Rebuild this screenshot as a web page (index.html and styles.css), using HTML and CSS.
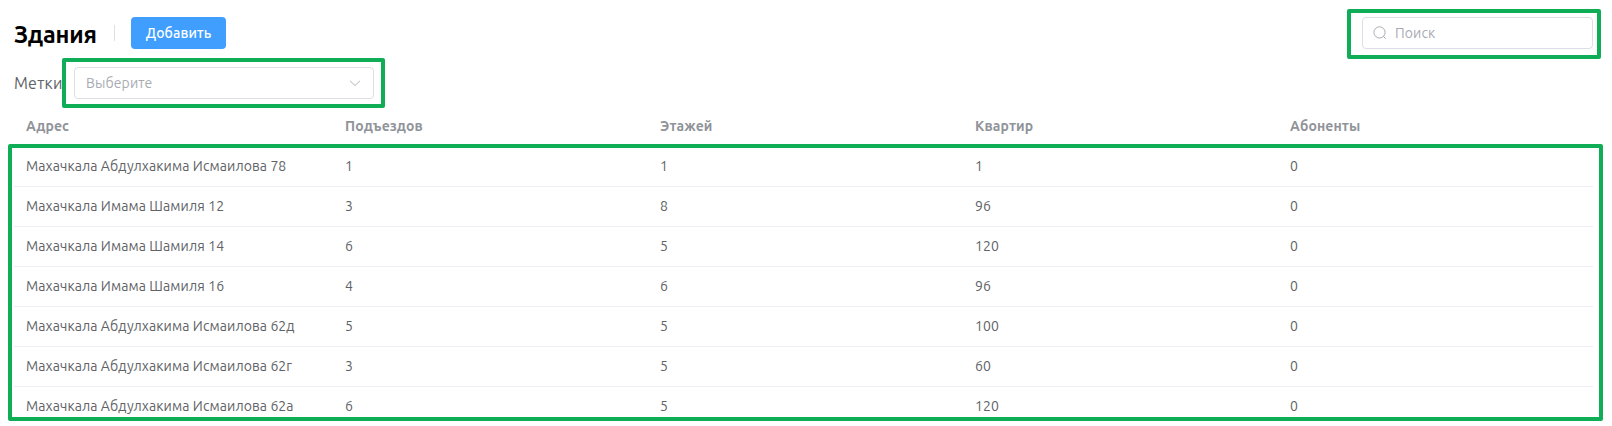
FILE: index.html
```
<!DOCTYPE html>
<html lang="ru">
<head>
<meta charset="utf-8">
<title>Здания</title>
<link rel="stylesheet" href="styles.css">
</head>
<body>
<main class="page">
  <header class="toolbar">
    <h1 class="title">Здания</h1>
    <span class="divider"></span>
    <button class="add">Добавить</button>
    <div class="search">
      <svg class="search-icon" viewBox="0 0 14 14" fill="none" stroke="currentColor" stroke-width="1"><circle cx="6.5" cy="6.4" r="5.6"/><path d="M10.5 10.5 12.7 12.7"/></svg>
      <span class="search-text">Поиск</span>
      <i class="frame frame-search"></i>
    </div>
  </header>
  <div class="filter">
    <label class="label">Метки</label>
    <div class="select">
      <span class="select-text">Выберите</span>
      <svg class="chevron" viewBox="0 0 14 14" fill="none" stroke="currentColor" stroke-width="0.9"><path d="M2 4.8 7 9.5 12 4.8"/></svg>
      <i class="frame frame-select"></i>
    </div>
  </div>
  <section class="table">
    <div class="row head"><span>Адрес</span><span>Подъездов</span><span>Этажей</span><span>Квартир</span><span>Абоненты</span></div>
    <div class="body">
      <div class="row"><span>Махачкала Абдулхакима Исмаилова 78</span><span>1</span><span>1</span><span>1</span><span>0</span></div>
      <div class="row"><span>Махачкала Имама Шамиля 12</span><span>3</span><span>8</span><span>96</span><span>0</span></div>
      <div class="row"><span>Махачкала Имама Шамиля 14</span><span>6</span><span>5</span><span>120</span><span>0</span></div>
      <div class="row"><span>Махачкала Имама Шамиля 16</span><span>4</span><span>6</span><span>96</span><span>0</span></div>
      <div class="row"><span>Махачкала Абдулхакима Исмаилова 62д</span><span>5</span><span>5</span><span>100</span><span>0</span></div>
      <div class="row"><span>Махачкала Абдулхакима Исмаилова 62г</span><span>3</span><span>5</span><span>60</span><span>0</span></div>
      <div class="row"><span>Махачкала Абдулхакима Исмаилова 62а</span><span>6</span><span>5</span><span>120</span><span>0</span></div>
      <i class="frame frame-table"></i>
    </div>
  </section>
</main>
</body>
</html>
```
FILE: styles.css
```
* { box-sizing: border-box; }
body {
  margin: 0;
  background: #fff;
  color: #606266;
  font: 14px/20px Ubuntu, "Noto Sans", sans-serif;
  overflow: hidden;
}
.page { height: 426px; padding: 17px 19px 0 14px; }
.toolbar { display: flex; align-items: center; height: 32px; }
.title { width: 100px; margin: 0; color: #000; font-size: 23.5px; line-height: 32px; font-weight: 700; letter-spacing: -0.2px; padding-top: 2px; }
.divider { width: 1px; height: 16px; background: #dcdfe6; }
.add {
  width: 95px; height: 32px; margin-left: 16px; padding: 0;
  border: 0; border-radius: 4px; background: #409eff; color: #fff;
  font: 500 14px/32px Ubuntu, "Noto Sans", sans-serif;
  letter-spacing: 0.1px;
}
.search {
  position: relative; display: flex; align-items: center;
  width: 231px; height: 32px; margin-left: auto; padding-left: 10px;
  border: 1px solid #dcdfe6; border-radius: 4px; color: #a8abb2;
}
.search-icon { width: 14px; height: 14px; margin-right: 8px; }
.search-text, .select-text { letter-spacing: 0.1px; }
.filter { display: flex; align-items: center; height: 32px; margin-top: 18px; }
.label { width: 60px; font-size: 16px; white-space: nowrap; letter-spacing: 0.2px; }
.select {
  position: relative; display: flex; align-items: center; justify-content: space-between;
  width: 300px; height: 32px; padding: 0 11px;
  border: 1px solid #dcdfe6; border-radius: 4px; color: #a8abb2;
}
.chevron { width: 14px; height: 14px; }
.frame { position: absolute; border: 4px solid #0ead56; border-radius: 2px; pointer-events: none; }
.frame-select { left: -13px; top: -10px; width: 323px; height: 50px; }
.frame-search { left: -16px; top: -9px; width: 254px; height: 50px; }
.frame-table { left: -6px; top: -3px; width: 1595px; height: 277px; }
.table { margin-top: 8px; }
.body { position: relative; }
.row {
  display: grid; grid-template-columns: 319px repeat(4, 315px); align-items: center;
  width: 1579px; height: 40px; border-bottom: 1px solid #ebeef5;
}
.row > span { padding: 0 0 2px 12px; white-space: nowrap; letter-spacing: 0.09px; }
.head { border-bottom: 0; color: #909399; font-weight: 700; }
.body .row:nth-child(7) { border-bottom-color: transparent; }
```
